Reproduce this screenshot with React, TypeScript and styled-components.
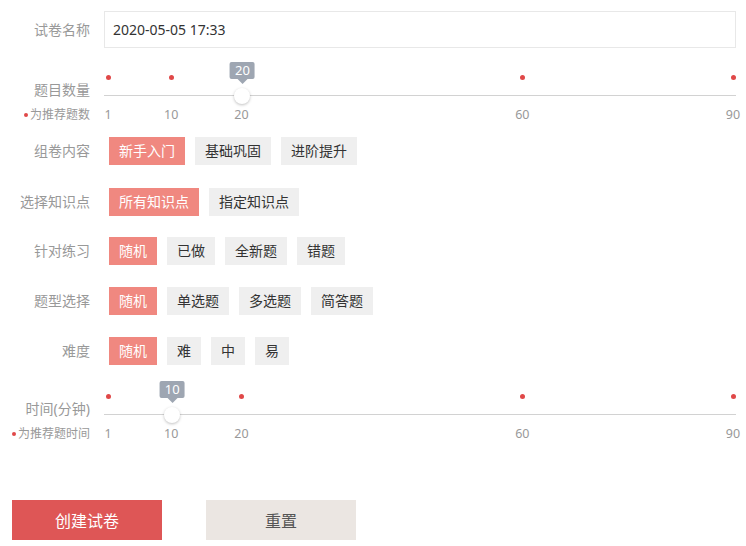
import styled, { createGlobalStyle } from "styled-components";

const GlobalStyle = createGlobalStyle`
  body {
    margin: 0;
    background: #fff;
    font-family: "Noto Sans", "Noto Sans CJK SC", sans-serif;
  }
`;

const MIN = 1;
const MAX = 90;
const MARKS = [1, 10, 20, 60, 90];
const pos = (v: number) => 4 + ((v - MIN) / (MAX - MIN)) * 625;

const Slider = ({ value }: { value: number }) => (
  <SliderArea>
    <Track />
    {MARKS.map((m) => (
      <Dot key={"d" + m} style={{ left: pos(m) }} />
    ))}
    {MARKS.map((m) => (
      <Tick key={"t" + m} style={{ left: pos(m) }}>
        {m}
      </Tick>
    ))}
    <Thumb style={{ left: pos(value) }} />
    <Tip style={{ left: pos(value) }}>{value}</Tip>
  </SliderArea>
);

const ChoiceRow = ({ label, items, top }: { label: string; items: string[]; top: number }) => (
  <Row $top={top}>
    <Label>{label}</Label>
    <Choices>
      {items.map((t, i) => (
        <Choice key={t} $active={i === 0}>
          {t}
        </Choice>
      ))}
    </Choices>
  </Row>
);

const App = () => {
  return (
    <Page>
      <GlobalStyle />
      <Row $top={11}>
        <Label>试卷名称</Label>
        <NameInput defaultValue="2020-05-05 17:33" />
      </Row>

      <SliderRow $top={12}>
        <SliderLabel>
          <span>题目数量</span>
          <Hint>为推荐题数</Hint>
        </SliderLabel>
        <Slider value={20} />
      </SliderRow>

      <ChoiceRow top={12} label="组卷内容" items={["新手入门", "基础巩固", "进阶提升"]} />
      <ChoiceRow top={23} label="选择知识点" items={["所有知识点", "指定知识点"]} />
      <ChoiceRow top={21} label="针对练习" items={["随机", "已做", "全新题", "错题"]} />
      <ChoiceRow top={22} label="题型选择" items={["随机", "单选题", "多选题", "简答题"]} />
      <ChoiceRow top={22} label="难度" items={["随机", "难", "中", "易"]} />

      <SliderRow $top={14}>
        <SliderLabel>
          <span>时间(分钟)</span>
          <Hint>为推荐题时间</Hint>
        </SliderLabel>
        <Slider value={10} />
      </SliderRow>

      <Actions>
        <BigButton $primary>创建试卷</BigButton>
        <BigButton>重置</BigButton>
      </Actions>
    </Page>
  );
};

export default App;

const Page = styled.div`
  width: 746px;
  height: 546px;
  overflow: hidden;
  display: flex;
  flex-direction: column;
`;

const Row = styled.div<{ $top: number }>`
  display: flex;
  align-items: center;
  margin-top: ${(p) => p.$top}px;
`;

const Label = styled.div`
  width: 90px;
  padding-right: 14px;
  text-align: right;
  font-size: 14px;
  color: #999;
  white-space: nowrap;
  margin-top: -2px;
`;

const NameInput = styled.input`
  width: 632px;
  height: 37px;
  box-sizing: border-box;
  border: 1px solid #e8e8e8;
  outline: none;
  padding: 0 8px;
  font-family: "Noto Sans", "Noto Sans CJK SC", sans-serif;
  font-size: 14px;
  color: #333;
`;

const SliderRow = styled.div<{ $top: number }>`
  display: flex;
  height: 65px;
  margin-top: ${(p) => p.$top}px;
`;

const SliderLabel = styled.div`
  width: 90px;
  padding-right: 14px;
  display: flex;
  flex-direction: column;
  align-items: flex-end;
  font-size: 14px;
  color: #999;
  white-space: nowrap;
  padding-top: 20px;
  line-height: 20px;
`;

const Hint = styled.span`
  font-size: 12px;
  margin-top: 5px;
  position: relative;
  &::before {
    content: "";
    position: absolute;
    left: -6px;
    top: 8px;
    width: 4px;
    height: 4px;
    border-radius: 50%;
    background: #e04848;
  }
`;

const SliderArea = styled.div`
  position: relative;
  width: 632px;
  height: 65px;
`;

const Track = styled.div`
  position: absolute;
  left: 0;
  right: 0;
  top: 35px;
  height: 1px;
  background: #d2d2d2;
`;

const Dot = styled.div`
  position: absolute;
  top: 15px;
  width: 5px;
  height: 5px;
  margin-left: -2.5px;
  border-radius: 50%;
  background: #e04848;
`;

const Tick = styled.div`
  position: absolute;
  top: 47px;
  transform: translateX(-50%);
  font-size: 12.5px;
  line-height: 16px;
  color: #999;
`;

const Thumb = styled.div`
  position: absolute;
  top: 28px;
  width: 16px;
  height: 16px;
  margin-left: -7px;
  border-radius: 50%;
  background: #fff;
  box-shadow: 0 1px 3px rgba(0, 0, 0, 0.25);
`;

const Tip = styled.div`
  position: absolute;
  top: 2px;
  height: 17px;
  padding: 0 5px;
  margin-left: 1px;
  transform: translateX(-50%);
  background: #9ea6b2;
  border-radius: 2px;
  color: #fff;
  font-size: 13px;
  line-height: 17px;
  &::after {
    content: "";
    position: absolute;
    left: 50%;
    top: 17px;
    margin-left: -5px;
    border-left: 5px solid transparent;
    border-right: 5px solid transparent;
    border-top: 5px solid #9ea6b2;
  }
`;

const Choices = styled.div`
  display: flex;
  gap: 10px;
  padding-left: 5px;
`;

const Choice = styled.div<{ $active?: boolean }>`
  height: 28px;
  padding: 0 10px;
  font-size: 14px;
  line-height: 28px;
  white-space: nowrap;
  background: ${(p) => (p.$active ? "#f08880" : "#efefef")};
  color: ${(p) => (p.$active ? "#fff" : "#333")};
  cursor: pointer;
`;

const Actions = styled.div`
  display: flex;
  gap: 44px;
  margin-top: 56px;
  padding-left: 12px;
`;

const BigButton = styled.button<{ $primary?: boolean }>`
  width: 150px;
  height: 40px;
  border: none;
  font-family: "Noto Sans", "Noto Sans CJK SC", sans-serif;
  font-size: 16px;
  background: ${(p) => (p.$primary ? "#de5656" : "#ebe6e2")};
  color: ${(p) => (p.$primary ? "#fff" : "#555")};
  cursor: pointer;
`;
